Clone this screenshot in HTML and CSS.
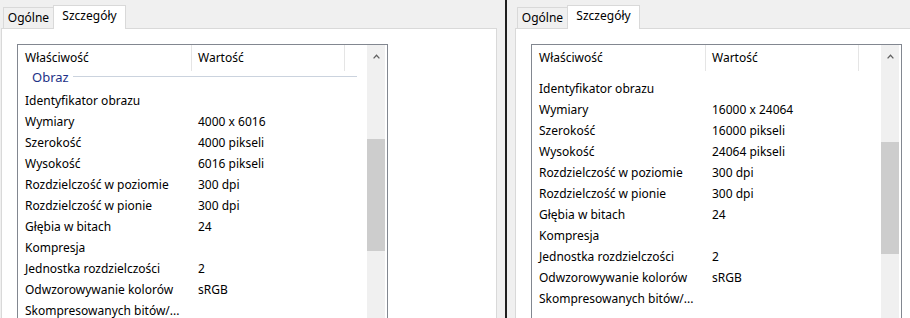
FILE: index.html
```html
<!DOCTYPE html>
<html lang="pl">
<head>
<meta charset="utf-8">
<title>Szczegóły</title>
<link rel="stylesheet" href="styles.css">
</head>
<body>
<div class="screen">
  <section class="win win-left">
    <div class="tabs">
      <div class="tab">Ogólne</div>
      <div class="tab active">Szczegóły</div>
    </div>
    <div class="panel">
      <div class="list">
        <div class="list-main">
          <div class="head">
            <div class="hcol c1">Właściwość</div>
            <div class="hcol c2">Wartość</div>
          </div>
          <div class="body">
            <div class="group"><span class="gtext">Obraz</span><i class="gline"></i></div>
            <div class="row"><span class="k">Identyfikator obrazu</span><span class="v"></span></div>
            <div class="row"><span class="k">Wymiary</span><span class="v">4000 x 6016</span></div>
            <div class="row"><span class="k">Szerokość</span><span class="v">4000 pikseli</span></div>
            <div class="row"><span class="k">Wysokość</span><span class="v">6016 pikseli</span></div>
            <div class="row"><span class="k">Rozdzielczość w poziomie</span><span class="v">300 dpi</span></div>
            <div class="row"><span class="k">Rozdzielczość w pionie</span><span class="v">300 dpi</span></div>
            <div class="row"><span class="k">Głębia w bitach</span><span class="v">24</span></div>
            <div class="row"><span class="k">Kompresja</span><span class="v"></span></div>
            <div class="row"><span class="k">Jednostka rozdzielczości</span><span class="v">2</span></div>
            <div class="row"><span class="k">Odwzorowywanie kolorów</span><span class="v">sRGB</span></div>
            <div class="row"><span class="k">Skompresowanych bitów/...</span><span class="v"></span></div>
          </div>
        </div>
        <div class="sbar">
          <div class="sbtn"><svg width="7" height="5" viewBox="0 0 7 5"><path d="M0.6 4.4 L3.5 1.3 L6.4 4.4" fill="none" stroke="#606060" stroke-width="1.3"/></svg></div>
          <div class="thumb thumb-left"></div>
        </div>
      </div>
    </div>
  </section>
  <div class="divider"></div>
  <section class="win win-right">
    <div class="tabs">
      <div class="tab">Ogólne</div>
      <div class="tab active">Szczegóły</div>
    </div>
    <div class="panel">
      <div class="list">
        <div class="list-main">
          <div class="head">
            <div class="hcol c1">Właściwość</div>
            <div class="hcol c2">Wartość</div>
          </div>
          <div class="body body-scrolled">
            <div class="row"><span class="k">Identyfikator obrazu</span><span class="v"></span></div>
            <div class="row"><span class="k">Wymiary</span><span class="v">16000 x 24064</span></div>
            <div class="row"><span class="k">Szerokość</span><span class="v">16000 pikseli</span></div>
            <div class="row"><span class="k">Wysokość</span><span class="v">24064 pikseli</span></div>
            <div class="row"><span class="k">Rozdzielczość w poziomie</span><span class="v">300 dpi</span></div>
            <div class="row"><span class="k">Rozdzielczość w pionie</span><span class="v">300 dpi</span></div>
            <div class="row"><span class="k">Głębia w bitach</span><span class="v">24</span></div>
            <div class="row"><span class="k">Kompresja</span><span class="v"></span></div>
            <div class="row"><span class="k">Jednostka rozdzielczości</span><span class="v">2</span></div>
            <div class="row"><span class="k">Odwzorowywanie kolorów</span><span class="v">sRGB</span></div>
            <div class="row"><span class="k">Skompresowanych bitów/...</span><span class="v"></span></div>
          </div>
        </div>
        <div class="sbar">
          <div class="sbtn"><svg width="7" height="5" viewBox="0 0 7 5"><path d="M0.6 4.4 L3.5 1.3 L6.4 4.4" fill="none" stroke="#606060" stroke-width="1.3"/></svg></div>
          <div class="thumb thumb-right"></div>
        </div>
      </div>
    </div>
  </section>
</div>
</body>
</html>
```

FILE: styles.css
```css
* { box-sizing: border-box; }
html, body { margin: 0; padding: 0; }
body {
  font-family: "Noto Sans", "Open Sans", sans-serif;
  font-size: 12px;
  color: #000;
  background: #f0f0f0;
}
.screen {
  display: flex;
  width: 910px;
  height: 318px;
  overflow: hidden;
  background: #f0f0f0;
}
.win {
  display: flex;
  flex-direction: column;
  height: 318px;
  overflow: hidden;
  background: #f0f0f0;
}
.win-left { width: 505px; padding-left: 1px; }
.win-right { flex: 1; padding-left: 8px; }
.divider {
  width: 2px;
  flex: none;
  background: #1f1f1f;
}
.tabs {
  display: flex;
  align-items: flex-end;
  height: 28px;
  padding-left: 2px;
  flex: none;
}
.tab {
  height: 21px;
  line-height: 20px;
  text-align: center;
  border: 1px solid #d9d9d9;
  border-bottom: none;
  border-right: none;
  background: #f0f0f0;
  width: 50px;
}
.tab.active {
  height: 24px;
  width: 73px;
  line-height: 20px;
  border-right: 1px solid #d9d9d9;
  background: #fff;
  margin-bottom: -1px;
  position: relative;
  z-index: 1;
}
.panel {
  flex: 1;
  background: #fff;
  border: 1px solid #d9d9d9;
  padding: 15px 0 0 15px;
}
.win-left .panel { width: 496px; flex: 1 0 auto; }
.win-right .panel { width: 420px; border-right: none; }
.list {
  width: 371px;
  height: 300px;
  border: 1px solid #828790;
  display: flex;
  padding-right: 2px;
  background: #fff;
}
.list-main { width: 349px; flex: none; }
.head {
  display: flex;
  height: 26px;
  line-height: 26px;
}
.hcol { white-space: nowrap; }
.hcol.c1 { width: 174px; padding-left: 7px; border-right: 1px solid #e5e5e5; }
.hcol.c2 { width: 153px; padding-left: 6px; border-right: 1px solid #e5e5e5; }
.body { display: flex; flex-direction: column; }
.body-scrolled { padding-top: 7px; }
.group {
  display: flex;
  align-items: flex-start;
  height: 19px;
  padding-left: 14px;
  padding-right: 10px;
}
.gtext {
  font-size: 13px;
  line-height: 12px;
  padding-top: 0;
  color: #1e3287;
}
.gline {
  flex: 1;
  height: 1px;
  margin: 5px 0 0 4px;
  background: #cbd3de;
}
.row {
  display: flex;
  height: 21px;
  line-height: 21px;
  white-space: nowrap;
}
.k { width: 174px; padding-left: 7px; }
.v { padding-left: 6px; }
.sbar {
  width: 18px;
  flex: none;
  background: #f0f0f0;
  display: flex;
  flex-direction: column;
}
.sbtn {
  height: 17px;
  display: flex;
  justify-content: center;
  padding-top: 9px;
}
.sbtn svg { display: block; }
.thumb {
  height: 112px;
  background: #cdcdcd;
}
.thumb-left { margin-top: 77px; }
.thumb-right { margin-top: 80px; }
```
